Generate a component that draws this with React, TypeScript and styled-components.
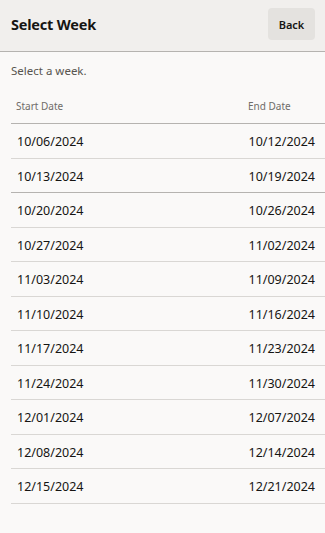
import React from "react";
import styled, { createGlobalStyle } from "styled-components";

const Global = createGlobalStyle`
  html, body { margin: 0; padding: 0; background: #faf9f8; }
  body { font-family: "Noto Sans", "Open Sans", sans-serif; color: #161513; }
  * { box-sizing: border-box; }
`;

const Page = styled.div`
  width: 325px;
  height: 533px;
  background: #faf9f8;
  display: flex;
  flex-direction: column;
`;

const Header = styled.header`
  height: 52px;
  background: #f1efed;
  border-bottom: 1px solid #b5b3b0;
  display: flex;
  align-items: center;
  justify-content: space-between;
  padding: 0 10px 0 11px;
`;

const Title = styled.h1`
  margin: -3px 0 0;
  font-size: 14.5px;
  font-weight: 700;
  color: #161513;
  letter-spacing: -0.2px;
`;

const BackButton = styled.button`
  width: 47px;
  height: 32px;
  margin-top: -3px;
  border: none;
  border-radius: 4px;
  background: #e4e2df;
  font-family: inherit;
  font-size: 11px;
  font-weight: 600;
  color: #161513;
  padding: 0;
`;

const Instruction = styled.p`
  margin: 0;
  padding: 11px 11px 0;
  height: 37px;
  font-size: 11.5px;
  color: #58554f;
`;

const Table = styled.div`
  margin-left: 11px;
  display: flex;
  flex-direction: column;
`;

const Row = styled.div<{ $head?: boolean; $strong?: boolean }>`
  height: ${(p) => (p.$head ? "35px" : "34.5px")};
  display: flex;
  align-items: center;
  justify-content: space-between;
  padding: ${(p) => (p.$head ? "0" : "2px")} 10px 0 ${(p) => (p.$head ? "5px" : "6px")};
  border-bottom: 1px solid ${(p) => (p.$head || p.$strong ? "#b5b3b0" : "#d9d7d4")};
  font-size: ${(p) => (p.$head ? "10px" : "12.5px")};
  color: ${(p) => (p.$head ? "#6f6c68" : "#161513")};
`;

const EndHead = styled.span`
  width: 67px;
`;

const weeks: [string, string][] = [
  ["10/06/2024", "10/12/2024"],
  ["10/13/2024", "10/19/2024"],
  ["10/20/2024", "10/26/2024"],
  ["10/27/2024", "11/02/2024"],
  ["11/03/2024", "11/09/2024"],
  ["11/10/2024", "11/16/2024"],
  ["11/17/2024", "11/23/2024"],
  ["11/24/2024", "11/30/2024"],
  ["12/01/2024", "12/07/2024"],
  ["12/08/2024", "12/14/2024"],
  ["12/15/2024", "12/21/2024"],
];

export default function App() {
  return (
    <Page>
      <Global />
      <Header>
        <Title>Select Week</Title>
        <BackButton>Back</BackButton>
      </Header>
      <Instruction>Select a week.</Instruction>
      <Table>
        <Row $head>
          <span>Start Date</span>
          <EndHead>End Date</EndHead>
        </Row>
        {weeks.map(([s, e], i) => (
          <Row key={s} $strong={i === 1}>
            <span>{s}</span>
            <span>{e}</span>
          </Row>
        ))}
      </Table>
    </Page>
  );
}
